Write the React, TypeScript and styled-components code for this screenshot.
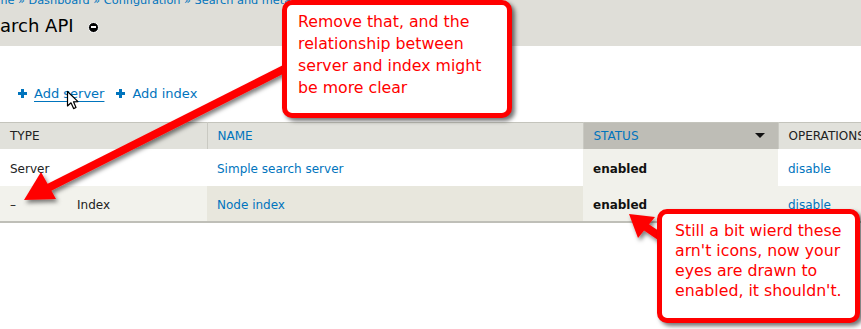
import React from "react";
import styled, { createGlobalStyle } from "styled-components";

const Global = createGlobalStyle`
  html, body { margin: 0; padding: 0; background: #ffffff; }
  body {
    width: 861px; height: 329px; overflow: hidden;
    font-family: "DejaVu Sans", Verdana, sans-serif;
    color: #333333;
  }
`;

const Page = styled.div`
  position: relative;
  width: 861px;
  height: 329px;
  overflow: hidden;
`;

const HeaderBand = styled.header`
  background: #dfded8;
  height: 46px;
  display: flex;
  flex-direction: column;
  overflow: hidden;
`;

const Breadcrumb = styled.nav`
  margin: -6px 0 0 -19px;
  font-size: 11.3px;
  line-height: 14px;
  white-space: nowrap;
  color: #0074bd;
  a { color: #0074bd; text-decoration: none; }
`;

const TitleRow = styled.div`
  display: flex;
  align-items: center;
  margin: 7px 0 0 -22.5px;
  height: 22px;
`;

const Title = styled.h1`
  margin: 0;
  font-size: 18px;
  line-height: 22px;
  font-weight: normal;
  color: #000000;
`;

const ShortcutIcon = styled.span`
  margin-left: 14px;
  margin-top: 2px;
  width: 9px;
  height: 9px;
  border-radius: 50%;
  background: #000;
  border: 1.5px solid #fff;
  display: inline-flex;
  align-items: center;
  justify-content: center;
  &::after {
    content: "";
    width: 5px;
    height: 2px;
    background: #fff;
  }
`;

const Content = styled.main`
  padding-top: 38.5px;
`;

const Actions = styled.ul`
  list-style: none;
  margin: 0 0 19.5px 0;
  padding: 0 0 0 18px;
  display: flex;
  gap: 12px;
  font-size: 13px;
  line-height: 18px;
`;

const ActionItem = styled.li`
  display: flex;
  align-items: center;
  gap: 7px;
`;

const Plus = styled.span`
  position: relative;
  width: 9px;
  height: 9px;
  flex: none;
  &::before, &::after {
    content: "";
    position: absolute;
    background: #0074bd;
  }
  &::before { left: 0; top: 3px; width: 9px; height: 3px; }
  &::after { left: 3px; top: 0; width: 3px; height: 9px; }
`;

const ActionLink = styled.a<{ $hover?: boolean }>`
  color: #0074bd;
  text-decoration: ${(p) => (p.$hover ? "underline" : "none")};
  text-underline-offset: 3px;
`;

const Table = styled.table`
  border-collapse: collapse;
  table-layout: fixed;
  width: 898px;
  font-size: 12px;
  border-top: 1px solid #c4c4bc;
  border-bottom: 2px solid #bfbfb8;
`;

const Th = styled.th<{ $w: number; $active?: boolean; $link?: boolean }>`
  width: ${(p) => p.$w}px;
  height: 26px;
  padding: 0 10px;
  text-align: left;
  font-weight: normal;
  font-size: 12px;
  text-transform: uppercase;
  background: ${(p) => (p.$active ? "#bebdb6" : "#e1e1db")};
  color: ${(p) => (p.$link ? "#0074bd" : "#222222")};
  border-left: 1px solid #c9c9c2;
  &:first-child { border-left: none; }
  box-sizing: border-box;
`;

const SortHead = styled.div`
  display: flex;
  align-items: center;
  justify-content: space-between;
  padding-right: 3px;
`;

const SortArrow = styled.span`
  width: 0;
  height: 0;
  border-left: 5px solid transparent;
  border-right: 5px solid transparent;
  border-top: 5px solid #111;
`;

const Td = styled.td<{ $bg: string; $h: number }>`
  height: ${(p) => p.$h}px;
  padding: 3px 10px 0 10px;
  background: ${(p) => p.$bg};
  white-space: nowrap;
  color: #222;
  box-sizing: border-box;
`;

const IndentMark = styled.span`
  display: inline-block;
  width: 67px;
`;

const CellLink = styled.a`
  color: #0074bd;
  text-decoration: none;
`;

const Status = styled.strong`
  font-weight: bold;
  color: #111;
`;

const Callout = styled.div<{ $left: number; $top: number; $w: number; $h: number; $pl: number; $pt: number; $lh: number }>`
  position: absolute;
  left: ${(p) => p.$left}px;
  top: ${(p) => p.$top}px;
  width: ${(p) => p.$w}px;
  height: ${(p) => p.$h}px;
  box-sizing: border-box;
  background: #ffffff;
  border: 5px solid #ff0000;
  border-radius: 10px;
  box-shadow: 3px 3px 4px rgba(0, 0, 0, 0.55);
  padding: ${(p) => p.$pt}px 6px 0 ${(p) => p.$pl}px;
  font-family: "DejaVu Sans", Tahoma, sans-serif;
  font-size: 15.75px;
  line-height: ${(p) => p.$lh}px;
  color: #ff0000;
`;

const Overlay = styled.svg`
  position: absolute;
  left: 0;
  top: 0;
  pointer-events: none;
`;

export default function App() {
  return (
    <Page>
      <Global />
      <HeaderBand>
        <Breadcrumb>
          <a>Home</a> » <a>Dashboard</a> » <a>Configuration</a> » <a>Search and metadata</a> » <a>Search API</a>
        </Breadcrumb>
        <TitleRow>
          <Title>Search API</Title>
          <ShortcutIcon />
        </TitleRow>
      </HeaderBand>
      <Content>
        <Actions>
          <ActionItem>
            <Plus />
            <ActionLink $hover>Add server</ActionLink>
          </ActionItem>
          <ActionItem>
            <Plus />
            <ActionLink>Add index</ActionLink>
          </ActionItem>
        </Actions>
        <Table>
          <thead>
            <tr>
              <Th $w={207}>Type</Th>
              <Th $w={376} $link>Name</Th>
              <Th $w={195} $link $active>
                <SortHead>
                  <span>Status</span>
                  <SortArrow />
                </SortHead>
              </Th>
              <Th $w={120}>Operations</Th>
            </tr>
          </thead>
          <tbody>
            <tr>
              <Td $h={37} $bg="#ffffff">Server</Td>
              <Td $h={37} $bg="#ffffff"><CellLink>Simple search server</CellLink></Td>
              <Td $h={37} $bg="#f1f1eb"><Status>enabled</Status></Td>
              <Td $h={37} $bg="#ffffff"><CellLink>disable</CellLink></Td>
            </tr>
            <tr>
              <Td $h={36} $bg="#f2f2ec"><IndentMark>–</IndentMark>Index</Td>
              <Td $h={36} $bg="#e8e7dd"><CellLink>Node index</CellLink></Td>
              <Td $h={36} $bg="#f1f1eb"><Status>enabled</Status></Td>
              <Td $h={36} $bg="#f1f1eb"><CellLink>disable</CellLink></Td>
            </tr>
          </tbody>
        </Table>
      </Content>

      <Overlay width={861} height={329} viewBox="0 0 861 329">
        <defs>
          <filter id="sh" x="-20%" y="-20%" width="140%" height="140%">
            <feDropShadow dx="2" dy="3" stdDeviation="2" floodColor="#000" floodOpacity="0.5" />
          </filter>
        </defs>
        <g filter="url(#sh)" fill="#ff0000" stroke="none">
          <line x1="292" y1="65" x2="44" y2="190" stroke="#ff0000" strokeWidth="8" />
          <polygon points="24,200 56,199 41,172" />
          <line x1="668" y1="242" x2="643" y2="225" stroke="#ff0000" strokeWidth="8" />
          <polygon points="629,214 655,217 638,238" />
        </g>
        <path
          d="M67.5 91.5 L67.5 106 L71 102.8 L73.6 108.6 L76 107.5 L73.5 101.8 L78 101.6 Z"
          fill="#ffffff"
          stroke="#000000"
          strokeWidth="1.2"
          strokeLinejoin="round"
        />
      </Overlay>

      <Callout $left={282} $top={0} $w={230} $h={118} $pl={11} $pt={6} $lh={22}>
        Remove that, and the relationship between server and index might be more clear
      </Callout>
      <Callout $left={657} $top={209} $w={203} $h={114} $pl={13} $pt={7} $lh={20}>
        Still a bit wierd these arn't icons, now your eyes are drawn to enabled, it shouldn't.
      </Callout>
    </Page>
  );
}
